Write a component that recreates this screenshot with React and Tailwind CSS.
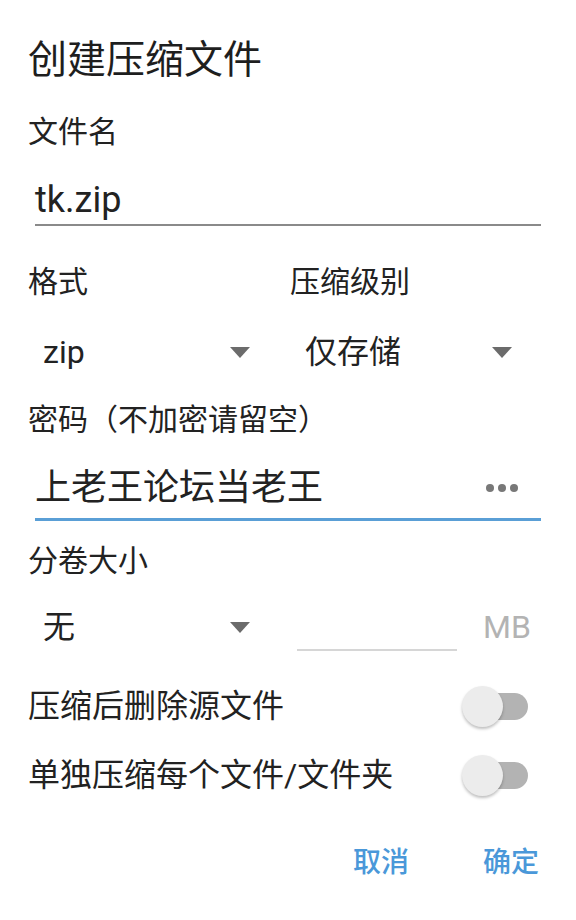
function Caret() {
  return (
    <svg width="20" height="11" viewBox="0 0 20 11" className="shrink-0">
      <path d="M0 0 H20 L10 11 Z" fill="#6b6b6b" />
    </svg>
  );
}

function Toggle() {
  return (
    <div className="relative w-[66px] h-[41px]">
      <div className="absolute left-[13px] right-0 top-[7px] h-[27px] rounded-full bg-[#b3b3b3]" />
      <div className="absolute left-0 top-0 w-[41px] h-[41px] rounded-full bg-[#ececec] shadow-[0_2px_3px_rgba(0,0,0,0.25)]" />
    </div>
  );
}

function Select({ value }) {
  return (
    <div className="h-[48px] flex items-center pl-[15px] pr-[40px]">
      <span className="flex-1 text-[32px] leading-none text-[#222]">{value}</span>
      <Caret />
    </div>
  );
}

export default function App() {
  return (
    <div
      className="w-[576px] h-[920px] bg-white flex flex-col pt-[36px] pl-[28px] pr-[24px] text-[#222]"
      style={{ fontFamily: "Roboto, 'Noto Sans CJK SC', sans-serif" }}
    >
      {/* Title */}
      <div className="h-[48px] flex items-center text-[39px] leading-none text-[#1e1e1e]">
        创建压缩文件
      </div>

      {/* File name */}
      <div className="mt-[28px] h-[40px] flex items-center text-[30px] leading-none">文件名</div>
      <div className="mt-[24px] ml-[7px] mr-[11px] border-b-2 border-[#8a8a8a]">
        <div className="h-[48px] flex items-center text-[36px] leading-none">tk.zip</div>
      </div>

      {/* Format / level */}
      <div className="mt-[36px] grid grid-cols-2">
        <div className="h-[40px] flex items-center text-[30px] leading-none">格式</div>
        <div className="h-[40px] flex items-center text-[30px] leading-none">压缩级别</div>
      </div>
      <div className="mt-[26px] grid grid-cols-2">
        <Select value="zip" />
        <Select value="仅存储" />
      </div>

      {/* Password */}
      <div className="mt-[24px] h-[40px] flex items-center text-[30px] leading-none">
        密码（不加密请留空）
      </div>
      <div className="mt-[24px] ml-[7px] mr-[11px] border-b-[3px] border-[#5a9fd6]">
        <div className="h-[54px] pb-[6px] flex items-center">
          <span className="flex-1 text-[36px] leading-none">上老王论坛当老王</span>
          <div className="flex gap-[4px] mr-[23px]">
            <span className="w-[8px] h-[8px] rounded-full bg-[#787878]" />
            <span className="w-[8px] h-[8px] rounded-full bg-[#787878]" />
            <span className="w-[8px] h-[8px] rounded-full bg-[#787878]" />
          </div>
        </div>
      </div>

      {/* Volume size */}
      <div className="mt-[20px] h-[40px] flex items-center text-[30px] leading-none">分卷大小</div>
      <div className="mt-[22px] grid grid-cols-2">
        <Select value="无" />
        <div className="h-[48px] flex items-center">
          <div className="ml-[7px] w-[160px] h-[48px] border-b-2 border-[#d6d6d6]" />
          <span className="ml-[26px] text-[32px] leading-none text-[#b3b3b3]">MB</span>
        </div>
      </div>

      {/* Switches */}
      <div className="mt-[31px] h-[48px] flex items-center justify-between pr-[24px]">
        <span className="text-[32px] leading-none">压缩后删除源文件</span>
        <Toggle />
      </div>
      <div className="mt-[21px] h-[48px] flex items-center justify-between pr-[24px]">
        <span className="text-[32px] leading-none">单独压缩每个文件/文件夹</span>
        <Toggle />
      </div>

      {/* Actions */}
      <div className="mt-[40px] h-[48px] flex items-center justify-end gap-[74px] pr-[13px] text-[28px] leading-none font-medium text-[#4a98d9]">
        <span>取消</span>
        <span>确定</span>
      </div>
    </div>
  );
}
